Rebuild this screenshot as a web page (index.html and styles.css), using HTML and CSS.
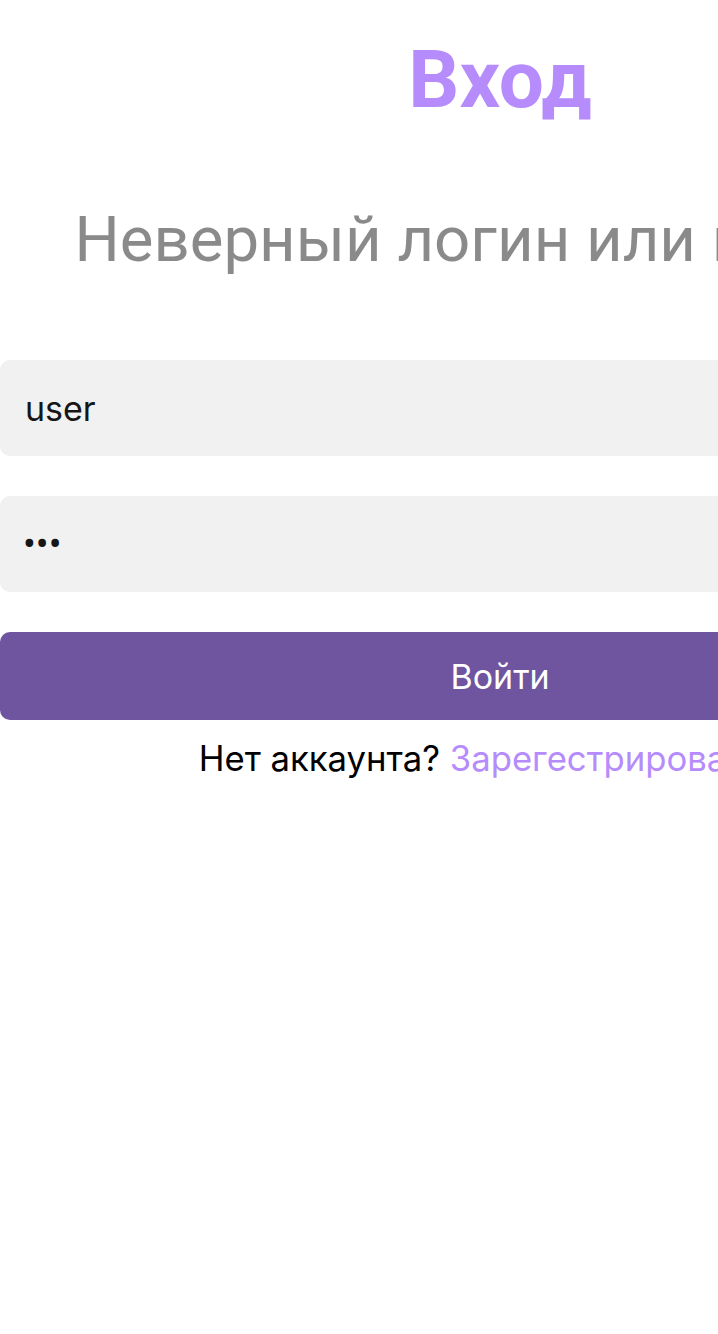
FILE: index.html
```html
<!DOCTYPE html>
<html lang="ru">
<head>
<meta charset="utf-8">
<title>Вход</title>
<link rel="stylesheet" href="styles.css">
</head>
<body>
<main class="page">
  <h1 class="title">Вход</h1>
  <p class="error">Неверный логин или пароль</p>
  <form class="form">
    <input class="field" type="text" value="user">
    <input class="field field-password" type="password" value="123">
    <button class="submit" type="button">Войти</button>
  </form>
  <p class="signup">Нет аккаунта? <a class="signup-link" href="#">Зарегестрироваться</a></p>
</main>
</body>
</html>
```

FILE: styles.css
```css
html, body {
  margin: 0;
  padding: 0;
  background: #ffffff;
}

body {
  font-family: Roboto, "Liberation Sans", sans-serif;
}

.page {
  width: 1000px;
  display: flex;
  flex-direction: column;
  align-items: stretch;
}

.title {
  margin: 40px 0 0;
  font-size: 80px;
  line-height: 80px;
  font-weight: 700;
  color: #b68cfd;
  text-align: center;
}

.error {
  margin: 87px 0 0;
  font-size: 63.5px;
  line-height: 65px;
  font-weight: 400;
  color: #8a8a8a;
  text-align: center;
}

.form {
  margin-top: 88px;
  display: flex;
  flex-direction: column;
  gap: 40px;
}

.field {
  box-sizing: border-box;
  width: 100%;
  height: 96px;
  border: none;
  border-radius: 10px;
  background: #f1f1f1;
  padding: 0 25px;
  font-family: Inter, Roboto, sans-serif;
  font-size: 34px;
  color: #161616;
  outline: none;
}

.field-password {
  font-family: Roboto, sans-serif;
  font-size: 38px;
  padding-left: 23px;
}

.submit {
  box-sizing: border-box;
  width: 100%;
  height: 88px;
  border: none;
  border-radius: 10px;
  background: #6f54a0;
  color: #ffffff;
  font-family: Inter, Roboto, sans-serif;
  font-size: 34px;
  cursor: pointer;
}

.signup {
  margin: 18px 0 0;
  font-family: Inter, Roboto, sans-serif;
  font-size: 34.7px;
  line-height: 40px;
  color: #000000;
  text-align: center;
}

.signup-link {
  color: #b68cfd;
  text-decoration: none;
}
```
